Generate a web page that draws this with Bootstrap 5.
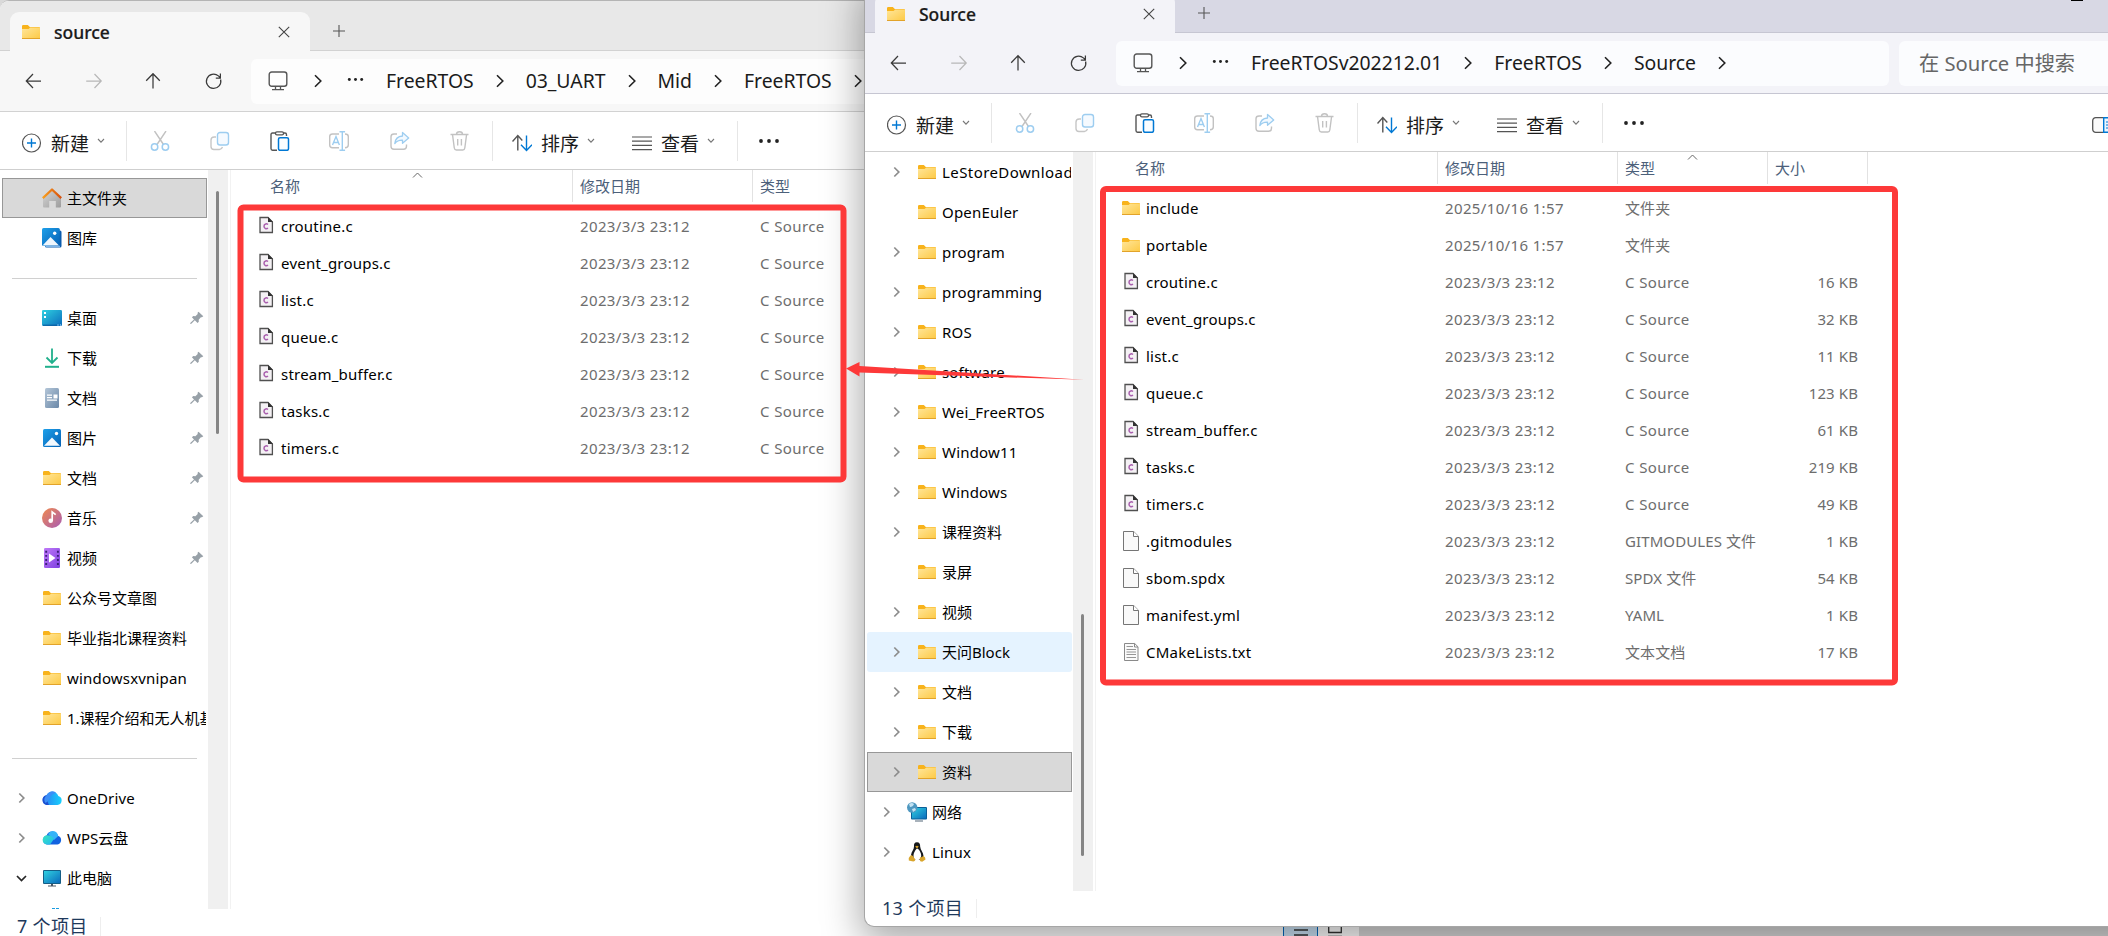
<!DOCTYPE html>
<html lang="zh-CN">
<head>
<meta charset="utf-8">
<title>文件资源管理器</title>
<link href="https://cdn.jsdelivr.net/npm/bootstrap@5.3.0/dist/css/bootstrap.min.css" rel="stylesheet">
<style>
body{width:2108px;height:936px;overflow:hidden;background:#d9d9d9;font-family:"Noto Sans","Noto Sans CJK SC",sans-serif;font-size:15px;line-height:20px;color:#000;white-space:nowrap}
svg{flex:none;display:block}
.desk{width:2108px;height:936px}
.win{position:absolute;height:944px;background:#fff;--bar:#e8e8e8;--nav:#f7f7f7;--box:#fdfdfd;--line:#d2d2d2}
.win-a{left:0;top:0;width:1359px;border-top:1px solid #b4b4b4;border-radius:9px 0 0 0}
.win-a .titles{height:50px}
.win-b{left:865px;top:-18px;width:1400px;border-radius:0 0 0 9px;--bar:#d8d8e4;--nav:#f3f3f8;--box:#fbfcfe;--line:#c6c6d2;box-shadow:0 0 0 1px #a6a6a6,0 12px 38px 4px rgba(0,0,0,.34)}
.titles{height:51px;background:var(--bar);border-bottom:1px solid var(--line)}
.tabx{width:300px;height:39px;margin-left:10px;margin-bottom:-1px;background:var(--nav);border-radius:9px 9px 0 0;padding:0 20px 0 11px;font-size:17.500px;font-weight:500;-webkit-text-stroke:.2px #1b1b1b}
.tabx .ttl{margin-left:13px;color:#1b1b1b}
.addtab{margin:0 0 13px 23px}
.dash{width:12px;height:2px;background:#000;margin:0 0 31px 861px}
.navrow{height:61px;background:var(--nav);border-bottom:1px solid var(--line);padding-left:24px}
.navrow>svg{margin-right:40px;color:#3a3a3a}
.navrow>svg:nth-child(2){color:#b8b8b8}
.addr{width:773px;height:45px;margin-left:-13px;background:var(--box);border-radius:6px;padding-left:17px;font-size:19.400px;color:#1b1b1b}
.addr .crumb{margin:0 22px;letter-spacing:-.02px}
.addr .first{margin:0 25px 0 26px}
.addr .more{margin-top:-4px}
.find{width:300px;height:45px;margin-left:10px;background:var(--box);border-radius:6px;padding-left:20px;color:#666;font-size:20.200px}
.tools{height:58px;border-bottom:1px solid #cfcfcf;padding-left:22px;font-size:19px;color:#1b1b1b}
.tools .low{margin-top:5px}
.g39{margin-right:39px}.g40{margin-right:40px}.g41{margin-right:41px}
.vr1{width:1px;height:40px;background:#e6e6e6;flex:none}
.s1{margin:0 23px 0 20px}.s2{margin:0 19px 0 22px}.s3{margin:0 20px 0 21px}
.cjkb{width:39px;margin:6px 6px 0 9px}
.bodyrow{height:739px}
.side{width:208px;overflow:hidden;padding-left:2px}
.win-a .side{padding-top:8px}
.it{height:40px;width:205px;padding-left:13px;overflow:hidden;border:1px solid transparent;flex:none}
.it .chev{width:12px;margin-right:14px;flex:none}
.it.lv2{padding-left:23px}
.it .lbl{margin-left:5px}
.latin{letter-spacing:.18px}
.wide{letter-spacing:.42px}
.it.sel{background:#d9d9d9;border-color:#979797}
.it.hov{background:#e5f3ff;border-radius:3px}
.pin{margin-left:auto;margin-right:2px}
.rule{height:40px;padding:20px 10px 0 10px;flex:none;width:205px}
.rule div{height:1px;background:#d0d0d0}
.nextic{padding:10px 0 0 50px}
.track{width:20px;background:#f0f0f0;padding-left:8px}
.thumb{width:3px;background:#858585;border-radius:2px}
.win-a .thumb{height:243px;margin-top:21px}
.win-b .thumb{height:242px;margin-top:462px}
.main{margin-left:2px;border-left:1px solid #f2f2f2}
.cols{display:grid;grid-template-columns:342px 180px 150px 100px;align-items:center}
.head{height:32px;color:#4c607a;position:relative}
.head div{height:32px;border-right:1px solid #e2e2e2;padding:0 0 1px 7px;display:flex;align-items:center}
.head div:first-child{padding-left:39px}
.sortc{position:absolute;top:2px;left:181px}
.win-b .sortc{left:591px}
.files{padding-top:6px}
.files .cols{height:37px;color:#6d6d6d;letter-spacing:.1px}
.files .cols>div{padding:0 0 2px 7px}
.files .cols>.fname{padding:0 0 0 25px;color:#000;letter-spacing:.22px}
.fname span{margin:-2px 0 0 5px}
.fname svg{margin-top:-1px}
.files .cols>.fdate{letter-spacing:.36px}
.files .cols>.ltype{letter-spacing:.4px}
.files .cols>div:last-child{padding-right:10px;text-align:right}
.status{height:34px;padding:0 0 0 17px;font-size:18px;line-height:17px;color:#1e395b;letter-spacing:.3px}
.status .vr1{height:19px;margin-left:13px;background:#eee}
.viewbtn{width:35px;height:34px;border:1px solid #0067c0;background:#cce4f7}
.iconbtn{margin:0 17px 0 10px}
.marks{position:absolute;left:0;top:0;pointer-events:none}
</style>
</head>
<body>
<svg width="0" height="0" class="position-absolute">
<defs>
<linearGradient id="gf" x1="0" y1="0" x2="1" y2="1"><stop offset="0" stop-color="#ffe69b"/><stop offset="1" stop-color="#fdc944"/></linearGradient>
<linearGradient id="gb" x1="0" y1="0" x2="1" y2="1"><stop offset="0" stop-color="#2fd0e0"/><stop offset="1" stop-color="#0b6cbd"/></linearGradient>
<linearGradient id="gp" x1="0" y1="0" x2="1" y2="1"><stop offset="0" stop-color="#1ea0ea"/><stop offset="1" stop-color="#0460b4"/></linearGradient>
<linearGradient id="gm" x1="0" y1="0" x2="1" y2="1"><stop offset="0" stop-color="#f08a4e"/><stop offset="1" stop-color="#a85cb4"/></linearGradient>
<linearGradient id="gv" x1="0" y1="0" x2="1" y2="1"><stop offset="0" stop-color="#c07af8"/><stop offset="1" stop-color="#7d3fe0"/></linearGradient>
<linearGradient id="gd" x1="0" y1="0" x2="1" y2="1"><stop offset="0" stop-color="#b4c6d8"/><stop offset="1" stop-color="#6a88a8"/></linearGradient>
<linearGradient id="gh" x1="0" y1="0" x2="1" y2="1"><stop offset="0" stop-color="#d5d5d5"/><stop offset="1" stop-color="#9c9c9c"/></linearGradient>
<linearGradient id="gr" x1="0" y1="0" x2="1" y2="0"><stop offset="0" stop-color="#f8a020"/><stop offset="1" stop-color="#d8500c"/></linearGradient>
<linearGradient id="gc" x1="0" y1="0" x2="1" y2="0"><stop offset="0" stop-color="#2a7cf0"/><stop offset="1" stop-color="#18d0fc"/></linearGradient>
<linearGradient id="gw" x1="0" y1="0" x2="1" y2="1"><stop offset="0" stop-color="#38e4c0"/><stop offset="1" stop-color="#20b8f0"/></linearGradient>
<symbol id="folder" viewBox="0 0 20 20"><path d="M1 4.200q0-1.200 1.200-1.200h4.600l2 2H18q1 0 1 1v3H1z" fill="#f8b31c"/><path d="M1 7h6.600l1.600-1.500H19V16q0 1-1 1H2q-1 0-1-1z" fill="url(#gf)"/><path d="M1 16.500h18" stroke="#e2a32a"/></symbol>
<symbol id="home" viewBox="0 0 20 20"><path d="M2 9.500L10 2.500l8 7h1V18.500q0 1-1 1h-4.200v-6.500H7.200v6.500H2q-1 0-1-1V10z" fill="url(#gh)"/><path d="M.8 10.200L10 1.500l9.200 8.700" fill="none" stroke="url(#gr)" stroke-width="2.300" stroke-linejoin="round"/></symbol>
<symbol id="gallery" viewBox="0 0 20 20"><rect x="3" y="2.500" width="16.500" height="17" rx="1.500" fill="#0b5cae"/><path d="M3 17.500h15v1.500H4z" fill="#7cb4ea"/><rect x="0" y="0" width="17.800" height="18" rx="1.500" fill="url(#gp)"/><path d="M.5 17.500L8.500 9l8.500 8.500z" fill="#eef6fd"/><circle cx="12.700" cy="5.200" r="1.700" fill="#fff"/></symbol>
<symbol id="picture" viewBox="0 0 20 20"><rect x="1" y="1" width="18" height="18" rx="1.500" fill="url(#gp)"/><path d="M2 17.800L10 9.500l8 8.300z" fill="#f3f9fe"/><circle cx="14.500" cy="5.500" r="1.700" fill="#fff"/></symbol>
<symbol id="desktop" viewBox="0 0 20 20"><rect x="0" y="2" width="20" height="16" rx="1.200" fill="url(#gb)"/><path d="M2 4h2v2H2zM2 8h2v2H2z" fill="#fff"/><path d="M1 17.200h14" stroke="#0a579b"/><path d="M15.500 17h1M18 17h1" stroke="#cfeaff"/></symbol>
<symbol id="down" viewBox="0 0 20 20"><path d="M10 .5v14M4.500 9.500l5.500 5.500 5.500-5.500" fill="none" stroke="#21b08c" stroke-width="1.800"/><path d="M3 18.800h14" stroke="#21b08c" stroke-width="2"/></symbol>
<symbol id="docs" viewBox="0 0 20 20"><rect x="3" y="0" width="14" height="20" rx="1.500" fill="url(#gd)"/><path d="M5 7.200h5M5 9.700h5M5 12.200h10" stroke="#fff" stroke-width="1.200"/><path d="M11.500 6.500h4v4h-4z" fill="#fff"/></symbol>
<symbol id="music" viewBox="0 0 20 20"><circle cx="10" cy="10" r="10" fill="url(#gm)"/><circle cx="8.700" cy="12.800" r="2.300" fill="#fff"/><path d="M10.200 13V4l3.500 2.700" fill="none" stroke="#fff" stroke-width="1.700"/></symbol>
<symbol id="video" viewBox="0 0 20 20"><rect x="2" y="0" width="16" height="20" rx="1.200" fill="url(#gv)"/><path d="M7 5.500l6.500 4.500L7 14.500z" fill="#fff"/><path d="M4.200 2.800v15M15.900 2.800v15" stroke="#3a1f78" stroke-width="1.900" stroke-dasharray="1.900 2.200"/></symbol>
<symbol id="onedrive" viewBox="0 0 20 20"><path d="M5 17a5 5 0 0 1-.6-9.800A6.500 6.500 0 0 1 16.300 8 4.600 4.600 0 0 1 15.500 17z" fill="url(#gc)"/><path d="M4.500 17a5 5 0 0 1 0-9.800q3 .3 1.500 4-1.200 3 1 5.800z" fill="#1c50d0"/><path d="M4.800 7q4-6 9.300-2.300-5 1.500-6.300 5.300-1 3.500-4.300 5-3-4 1.300-8z" fill="#3b8ef7"/></symbol>
<symbol id="wps" viewBox="0 0 20 20"><path d="M5 16.500a4.600 4.600 0 0 1-.4-9 6 6 0 0 1 11.400.3 4.500 4.500 0 0 1-.5 8.700z" fill="#1262e0"/><path d="M6 6q3-4.500 7-2.500 3 1.500 3 4.800L12 12z" fill="#35b4f8"/><path d="M5 16.500a4.600 4.600 0 0 1 .5-9.200q4 0 6.500 3.700L8 16.500z" fill="url(#gw)"/></symbol>
<symbol id="pc" viewBox="0 0 20 20"><rect x="1" y="2" width="18" height="14" rx="1" fill="#155e86"/><rect x="2" y="3" width="16" height="12" fill="url(#gb)"/><path d="M9 16h2v1.500h3v1H6v-1h3z" fill="#4b5763"/></symbol>
<symbol id="net" viewBox="0 0 20 20"><rect x="4" y="5" width="16" height="12.500" rx="1" fill="#0b5f98"/><rect x="5" y="6" width="14" height="10.500" fill="url(#gb)"/><path d="M8 19h8" stroke="#8b98a5" stroke-width="1.500"/><circle cx="5.200" cy="5.500" r="5.200" fill="#4f98c0"/><path d="M2 2q3-2 5 0-1 3-4 3zM5 7l3-1 1 2-3 2z" fill="#c3e3f3"/></symbol>
<symbol id="tux" viewBox="0 0 20 20"><path d="M10 .3c-2.600 0-3.200 2-3 4.200.2 2.500-2.500 5-3 8.500l3 5h6.500l3-4c0-3.500-3.200-6.500-3.300-9.300C13.200 2 12.500.3 10 .3z" fill="#16181a"/><path d="M10 6.500c-1.300.5-1.900 2.500-3 4.500-1 2.500-.8 7.300 3.200 7.300s4.600-4 3.600-7C12.900 9 11.500 6.500 10 6.500z" fill="#fff"/><path d="M8.200 4.500q1.800-1.300 3.500 0l-1.700 2z" fill="#d9a52c"/><path d="M3.500 13.500q1.500-.8 2.600.8l2 3q.5 2-2 2.300L1.800 18.400q-.5-3 1.700-4.900zM13 15q1.500 1 3.300-1.300 2.400 1.800 2.200 3.800l-3.300 2.300q-2.500 0-2.500-2z" fill="#d9a52c"/></symbol>
<symbol id="pin" viewBox="0 0 14 14"><path d="M8.500.7l4.800 4.600-1.400.9-1 .1-2.200 2.500.1 2-1.200 1.300-2.800-2.800L1 13l-.7-.2L.2 12 4 8.600 1.900 6.300l1.400-1.200 2.100.1L7.700 3l-.1-1.300z" fill="#98a1a8"/></symbol>
<symbol id="cv" viewBox="0 0 12 12"><path d="M3.300 1.500L7.800 6l-4.500 4.500" fill="none" stroke="#8c8c8c" stroke-width="1.700"/></symbol>
<symbol id="cvd" viewBox="0 0 12 12"><path d="M1 4l4.500 4.500L10 4" fill="none" stroke="#262626" stroke-width="1.700"/></symbol>
<symbol id="cfile" viewBox="0 0 20 20"><path d="M4 1.500h8L16.400 6v10.500H4z" fill="#f4f1f4" stroke="#505050" stroke-width="1.300"/><path d="M12 1l5 5h-5z" fill="#333"/><path d="M12 8.500q-1-.8-2.300-.6-1.700.4-1.700 2.400t1.700 2.400q1.300.2 2.300-.6" fill="none" stroke="#a95fae" stroke-width="1.500"/></symbol>
<symbol id="file" viewBox="0 0 20 20"><path d="M2.500.5h10.200l4.800 4.800v14.200h-15z" fill="#f9f9f9" stroke="#757575"/><path d="M12.500.5v5h5" fill="#fff" stroke="#757575"/></symbol>
<symbol id="txt" viewBox="0 0 20 20"><path d="M3.500 1.500h10.200l3.300 3.300v13.700H3.500z" fill="#fafafa" stroke="#8a8a8a"/><path d="M13.500 1.500v3.500H17" fill="none" stroke="#8a8a8a"/><path d="M5.500 4.500H12M5.500 7.500h9.500M5.500 10h9.500M5.500 12.500h9.500M5.500 15.500h9.500" stroke="#8a8a8a" stroke-width=".9"/></symbol>
<symbol id="x" viewBox="0 0 12 12"><path d="M.8.800l10.400 10.400M11.200.8L.8 11.200" stroke="#444" stroke-width="1.100"/></symbol>
<symbol id="plus" viewBox="0 0 12 12"><path d="M6 0v12M0 6h12" stroke="#555" stroke-width="1.100"/></symbol>
<symbol id="back" viewBox="0 0 20 20"><path d="M17 10H2.500M9 3L2.300 10 9 17" fill="none" stroke="currentColor" stroke-width="1.250"/></symbol>
<symbol id="fwd" viewBox="0 0 20 20"><path d="M2.200 10H17M10.500 3l6.700 7-6.700 7" fill="none" stroke="currentColor" stroke-width="1.250"/></symbol>
<symbol id="up" viewBox="0 0 20 20"><path d="M9 17.500V3M2.200 9.700L9 2.700l6.800 7" fill="none" stroke="currentColor" stroke-width="1.250"/></symbol>
<symbol id="ref" viewBox="0 0 20 20"><path d="M16.600 8.500a7.200 7.200 0 1 1-2.200-3.600l2 1.800M16.400 2.500v4.500h-4.600" fill="none" stroke="currentColor" stroke-width="1.250"/></symbol>
<symbol id="mon" viewBox="0 0 20 20"><rect x="1.200" y="1" width="17.600" height="14.300" rx="2.500" fill="none" stroke="#555" stroke-width="1.400"/><path d="M7.500 15.500v3M12.500 15.500v3M4 18.700h12" stroke="#555" stroke-width="1.300"/></symbol>
<symbol id="cb" viewBox="0 0 8 14"><path d="M1 1.300L6.800 7 1 12.700" fill="none" stroke="#222" stroke-width="1.600"/></symbol>
<symbol id="new" viewBox="0 0 20 20"><circle cx="9.500" cy="10" r="9" fill="none" stroke="#555" stroke-width="1.200"/><path d="M9.500 5.500v9M5 10h9" stroke="#0078d4" stroke-width="1.400"/></symbol>
<symbol id="cd" viewBox="0 0 10 8"><path d="M2 2l3 3.200L8 2" fill="none" stroke="#777" stroke-width="1.100"/></symbol>
<symbol id="cut" viewBox="0 0 20 20"><path d="M4.500 0l9 13.500M16 0L7 13.500" stroke="#c2c2c2" stroke-width="1.400"/><g fill="none" stroke="#9dcdf0" stroke-width="1.500"><circle cx="4.600" cy="16" r="3.200"/><circle cx="15.400" cy="16" r="3.200"/></g></symbol>
<symbol id="copy" viewBox="0 0 20 20"><path d="M6 6H4.200Q1 6 1 9v6.500Q1 18.500 4 18.500h5.500q2 0 3-2.500" fill="none" stroke="#c6c6c6" stroke-width="1.400"/><rect x="7.500" y="1.500" width="11" height="12.500" rx="2.500" fill="#f5faff" stroke="#9dcdf0" stroke-width="1.400"/></symbol>
<symbol id="paste" viewBox="0 0 20 20"><path d="M6 2H2.500Q1 2 1 3.500v14Q1 19.200 2.500 19.200H7M13 2h2q1.500 0 1.500 1.700V5" fill="none" stroke="#555" stroke-width="1.400"/><rect x="5.500" y=".8" width="8" height="3" rx="1.400" fill="#fff" stroke="#555" stroke-width="1.300"/><rect x="8.500" y="6.800" width="10" height="12.500" rx="1.500" fill="#fafdff" stroke="#0078d4" stroke-width="1.500"/></symbol>
<symbol id="ren" viewBox="0 0 20 20"><path d="M10 3H3.500Q.7 3 .7 5.500v8.500q0 2.700 2.800 2.700H10M16 3q3.300 0 3.300 2.500v8.500q0 2.700-3.300 2.700" fill="none" stroke="#c2c2c2" stroke-width="1.400"/><path d="M13.300 1v18M10.500.8h5.600M10.500 19.200h5.600M3.500 14L7 5.500l3.400 8.500M4.500 11.500h5" fill="none" stroke="#9dcdf0" stroke-width="1.400"/></symbol>
<symbol id="share" viewBox="0 0 20 20"><path d="M7 3H4Q1 3 1 5.700v9.600Q1 18.300 4 18.300h9.500q3 0 3-3V13.500" fill="none" stroke="#c2c2c2" stroke-width="1.400"/><path d="M12.500 1.500L18.700 7l-6.200 5.300V9.200Q7.500 9 4.800 12.500 5.500 5.500 12.500 5z" fill="#f2f9ff" stroke="#9dcdf0" stroke-width="1.300" stroke-linejoin="round"/></symbol>
<symbol id="trash" viewBox="0 0 20 20"><path d="M.5 3.500h18M2.500 3.500L4.300 17q.3 2 2 2h6.500q1.700 0 2-2L16.600 3.500M6.500 3.300Q6.500.7 9.500.7t3 2.600M7.700 8v6.500M11.400 8v6.500" fill="none" stroke="#c2c2c2" stroke-width="1.400"/></symbol>
<symbol id="sort" viewBox="0 0 20 20"><path d="M5.800 17.500V3M.5 8.500l5.300-6 4.500 5" fill="none" stroke="#555" stroke-width="1.400"/><path d="M14.500 2.500V17M9 11.800l5.500 5.700 5.500-5.700" fill="none" stroke="#0078d4" stroke-width="1.400"/></symbol>
<symbol id="view" viewBox="0 0 20 20"><path d="M0 4h20M0 8.200h20M0 12.400h20M0 16.600h20" stroke="#555" stroke-width="1.200"/></symbol>
<symbol id="dots" viewBox="0 0 22 6"><g fill="#222"><circle cx="3" cy="3" r="1.900"/><circle cx="11" cy="3" r="1.900"/><circle cx="19" cy="3" r="1.900"/></g></symbol>
</defs>
</svg>

<div class="desk position-relative overflow-hidden">
  <section class="win win-a overflow-hidden" id="winA"></section>
  <section class="win win-b" id="winB"></section>

  <!-- Red annotations -->
  <svg class="marks" width="2108" height="936"><g fill="none" stroke="#fd3939" stroke-width="6"><rect x="240.500" y="207.500" width="603" height="272" rx="3"/><rect x="1103" y="189" width="792" height="493.500" rx="3"/></g><path d="M846 368.500L859.500 362V366L1084 379.800 859.500 372.500V376.500z" fill="#fd3939"/></svg>
</div>

<script>
const ic = (n, w = 20, h = 20, c = '') => `<svg class="${c}" width="${w}" height="${h}"><use href="#${n}"/></svg>`;
const row = 'd-flex align-items-center';
const hasCjk = s => /[\u4e00-\u9fff]/.test(s);

// Sidebar entry: [icon, label, expander (cv, cvd or ''), extra classes, pinned]
const item = e => {
  if (e === '-') return '<div class="rule"><div></div></div>';
  const [icon, label, exp = '', cls = '', pinned = false] = e;
  const spacing = label === 'LeStoreDownload' ? 'wide' : hasCjk(label) ? '' : 'latin';
  return `<div class="it ${row} ${cls}">${exp ? ic(exp, 12, 12, 'chev') : '<span class="chev"></span>'}${ic(icon)}<span class="lbl ${spacing}">${label}</span>${pinned ? ic('pin', 14, 14, 'pin') : ''}</div>`;
};
const file = ([icon, name, date, type, size]) =>
  `<div class="cols"><div class="fname ${row}">${ic(icon)}<span>${name}</span></div><div class="fdate">${date}</div><div class="${type === 'C Source' ? 'ltype' : ''}">${type}</div><div>${size || ''}</div></div>`;

const toolbar = extra => `<div class="tools ${row}">
  ${ic('new', 20, 20, 'low')}<span class="cjkb">新建</span>${ic('cd', 10, 8)}<span class="vr1 s1"></span>
  ${ic('cut', 20, 20, 'g40')}${ic('copy', 20, 20, 'g40')}${ic('paste', 20, 20, 'g39')}${ic('ren', 20, 20, 'g41')}${ic('share', 20, 20, 'g40')}${ic('trash')}
  <span class="vr1 s2"></span>${ic('sort', 20, 20, 'low')}<span class="cjkb">排序</span>${ic('cd', 10, 8)}
  ${ic('view', 20, 20, 'low ms-auto flex-none')}<span class="cjkb">查看</span>${ic('cd', 10, 8)}<span class="vr1 s3"></span>${ic('dots', 22, 6)}${extra}</div>`.replace('low ms-auto flex-none"', 'low" style="margin-left:36px"');

const windowHtml = w => `
  <div class="titles d-flex align-items-end">
    <div class="tabx ${row}">${ic('folder')}<span class="ttl">${w.title}</span>${ic('x', 12, 12, 'ms-auto')}</div>
    ${ic('plus', 12, 12, 'addtab')}${w.titleExtra}
  </div>
  <div class="navrow ${row}">
    ${ic('back')}${ic('fwd')}${ic('up')}${ic('ref')}
    <div class="addr ${row}">${ic('mon')}${ic('cb', 8, 14, 'first')}${ic('dots', 17, 5, 'more')}${w.path.map(p => `<span class="crumb">${p}</span>${ic('cb', 8, 14)}`).join('')}</div>
    ${w.find}
  </div>
  ${toolbar(w.toolExtra)}
  <div class="bodyrow d-flex">
    <nav class="side d-flex flex-column">${w.side.map(item).join('')}${w.sideExtra}</nav>
    <div class="track"><div class="thumb"></div></div>
    <div class="main">
      <div class="head cols"><div>名称</div><div>修改日期</div><div>类型</div><div>大小</div><svg class="sortc" width="11" height="7"><path d="M1 5.500L5.500 1 10 5.500" fill="none" stroke="#666"/></svg></div>
      <div class="files">${w.files.map(file).join('')}</div>
    </div>
  </div>
  <div class="status ${row}"><span>${w.count} 个项目</span><span class="vr1"></span>${w.statusExtra}</div>`;

const d = '2023/3/3 23:12';
const sources = [['croutine.c', '16'], ['event_groups.c', '32'], ['list.c', '11'], ['queue.c', '123'], ['stream_buffer.c', '61'], ['tasks.c', '219'], ['timers.c', '49']];

document.getElementById('winA').innerHTML = windowHtml({
  title: 'source', titleExtra: '', find: '', toolExtra: '', count: 7,
  path: ['FreeRTOS', '03_UART', 'Mid', 'FreeRTOS'],
  side: [['home', '主文件夹', '', 'sel'], ['gallery', '图库'], '-',
    ['desktop', '桌面', '', '', true], ['down', '下载', '', '', true], ['docs', '文档', '', '', true], ['picture', '图片', '', '', true],
    ['folder', '文档', '', '', true], ['music', '音乐', '', '', true], ['video', '视频', '', '', true],
    ['folder', '公众号文章图'], ['folder', '毕业指北课程资料'], ['folder', 'windowsxvnipan'], ['folder', '1.课程介绍和无人机基'], '-',
    ['onedrive', 'OneDrive', 'cv'], ['wps', 'WPS云盘', 'cv'], ['pc', '此电脑', 'cvd']],
  sideExtra: '<div class="nextic d-flex"><svg width="8" height="8"><path d="M0 0h3v3H0zM4 0h3v3H4z" fill="#1a9be0"/></svg></div>',
  files: sources.map(([n]) => ['cfile', n, d, 'C Source']),
  statusExtra: '<div class="viewbtn d-flex justify-content-center ms-auto"><svg width="14" height="30"><path d="M0 20h14M0 25h14" stroke="#333" stroke-width="1.300"/></svg></div><svg class="iconbtn" width="14" height="30"><path d="M.7 8v13.500h12.600V8M0 25.500h14" fill="none" stroke="#333" stroke-width="1.300"/></svg>'
});

document.getElementById('winB').innerHTML = windowHtml({
  title: 'Source', titleExtra: '<span class="dash"></span>', count: 13,
  path: ['FreeRTOSv202212.01', 'FreeRTOS', 'Source'],
  find: `<div class="find ${row}">在 Source 中搜索</div>`,
  toolExtra: '<svg width="24" height="16" style="margin:4px 0 0 447px"><rect x=".7" y=".7" width="22" height="14.600" rx="3" fill="#fafafa" stroke="#555" stroke-width="1.300"/><path d="M11.700.7H20q3 0 3 3v8.600q0 3-3 3h-8.300z" fill="#eaf5ff" stroke="#0078d4" stroke-width="1.400"/><path d="M14 5h7M14 8h7M14 11h7" stroke="#0078d4"/></svg>',
  side: [['LeStoreDownload', 1], ['OpenEuler', 0], ['program', 1], ['programming', 1], ['ROS', 1], ['software', 1], ['Wei_FreeRTOS', 1], ['Window11', 1], ['Windows', 1],
    ['课程资料', 1], ['录屏', 0], ['视频', 1], ['天问Block', 1, 'hov'], ['文档', 1], ['下载', 1], ['资料', 1, 'sel']]
    .map(([n, e, c = '']) => ['folder', n, e ? 'cv' : '', 'lv2 ' + c]).concat([['net', '网络', 'cv'], ['tux', 'Linux', 'cv']]),
  sideExtra: '',
  files: [['folder', 'include', '2025/10/16 1:57', '文件夹'], ['folder', 'portable', '2025/10/16 1:57', '文件夹'],
    ...sources.map(([n, s]) => ['cfile', n, d, 'C Source', s + ' KB']),
    ['file', '.gitmodules', d, 'GITMODULES 文件', '1 KB'], ['file', 'sbom.spdx', d, 'SPDX 文件', '54 KB'],
    ['file', 'manifest.yml', d, 'YAML', '1 KB'], ['txt', 'CMakeLists.txt', d, '文本文档', '17 KB']],
  statusExtra: ''
});
</script>
<script src="https://cdn.jsdelivr.net/npm/bootstrap@5.3.0/dist/js/bootstrap.bundle.min.js"></script>
</body>
</html>
